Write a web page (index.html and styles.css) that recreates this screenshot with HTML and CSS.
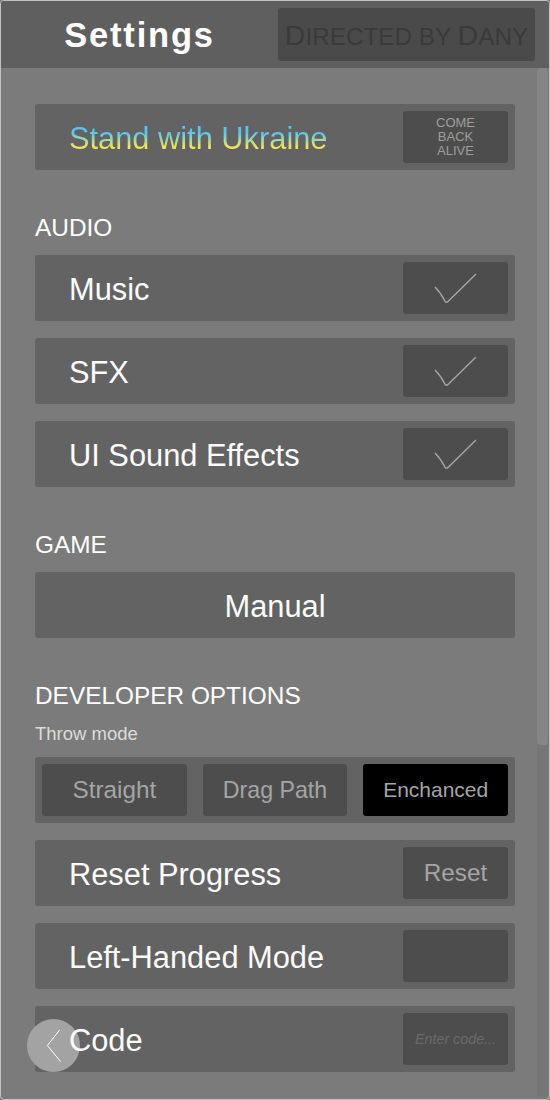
FILE: index.html
```html
<!DOCTYPE html>
<html lang="en">
<head>
    <meta charset="UTF-8">
    <meta name="viewport" content="width=device-width, initial-scale=1.0">
    <title>Settings</title>
    <link rel="stylesheet" href="styles.css">
</head>
<body>
    <div class="screen">
        <div class="header">
            <h1 class="title">Settings</h1>
            <div class="credit">
                <span class="big">D</span>IRECTED BY <span class="big">D</span>ANY
            </div>
        </div>

        <div class="content">
            <div class="card">
                <span class="label ukraine">Stand with Ukraine</span>
                <div class="box small-text">COME<br>BACK<br>ALIVE</div>
            </div>

            <h3 class="section">AUDIO</h3>
            <div class="stack">
                <div class="card">
                    <span class="label">Music</span>
                    <div class="box">
                        <svg class="check" width="105" height="52" viewBox="0 0 105 52">
                            <path d="M32 25 Q38 31 42.5 40 L44.5 40 L73 12" fill="none" stroke="#a4a4a4" stroke-width="1.4"/>
                        </svg>
                    </div>
                </div>
                <div class="card">
                    <span class="label">SFX</span>
                    <div class="box">
                        <svg class="check" width="105" height="52" viewBox="0 0 105 52">
                            <path d="M32 25 Q38 31 42.5 40 L44.5 40 L73 12" fill="none" stroke="#a4a4a4" stroke-width="1.4"/>
                        </svg>
                    </div>
                </div>
                <div class="card">
                    <span class="label">UI Sound Effects</span>
                    <div class="box">
                        <svg class="check" width="105" height="52" viewBox="0 0 105 52">
                            <path d="M32 25 Q38 31 42.5 40 L44.5 40 L73 12" fill="none" stroke="#a4a4a4" stroke-width="1.4"/>
                        </svg>
                    </div>
                </div>
            </div>

            <h3 class="section">GAME</h3>
            <div class="card center">
                <span class="label">Manual</span>
            </div>

            <h3 class="section">DEVELOPER OPTIONS</h3>
            <p class="sub">Throw mode</p>
            <div class="stack">
                <div class="card options">
                    <div class="opt opt-a">Straight</div>
                    <div class="opt opt-b">Drag Path</div>
                    <div class="opt opt-c active">Enchanced</div>
                </div>
                <div class="card">
                    <span class="label">Reset Progress</span>
                    <div class="box btn-text">Reset</div>
                </div>
                <div class="card">
                    <span class="label">Left-Handed Mode</span>
                    <div class="box"></div>
                </div>
                <div class="card">
                    <span class="label">Code</span>
                    <div class="box placeholder">Enter code...</div>
                </div>
            </div>
        </div>

        <div class="scrollbar"><div class="thumb"></div></div>

        <button class="back" aria-label="Back">
            <svg width="53" height="53" viewBox="0 0 53 53">
                <path d="M32.6 11 L20.4 26.5 L33.7 42.7" fill="none" stroke="#ffffff" stroke-width="1"/>
            </svg>
        </button>
    </div>
</body>
</html>
```

FILE: styles.css
```css
body {
    margin: 0;
    background: #7b7b7b;
    font-family: "Liberation Sans", Arial, sans-serif;
}

.screen {
    position: relative;
    width: 550px;
    height: 1100px;
    box-sizing: border-box;
    border: 1px solid #c2c2c2;
    border-radius: 4px;
    background: #7b7b7b;
    overflow: hidden;
}

.header {
    display: flex;
    height: 67px;
    background: #5f5f5f;
}

.title {
    flex: 0 0 277px;
    margin: 0;
    text-align: center;
    color: #ffffff;
    font-size: 34.5px;
    letter-spacing: 1.8px;
    line-height: 68px;
    font-weight: bold;
}

.credit {
    margin-top: 7px;
    width: 257px;
    height: 53px;
    box-sizing: border-box;
    border-radius: 3px;
    background: #4a4a4a;
    color: #3a3a3a;
    font-size: 24.3px;
    line-height: 55px;
    text-align: center;
    white-space: nowrap;
}

.credit .big {
    font-size: 28.5px;
}

.content {
    padding: 36px 34px 0 34px;
}

.stack {
    display: flex;
    flex-direction: column;
    gap: 17px;
}

.card {
    display: flex;
    align-items: center;
    justify-content: space-between;
    height: 66px;
    box-sizing: border-box;
    padding: 7px 7px 7px 34px;
    border-radius: 3px;
    background: #636363;
}

.card.center {
    justify-content: center;
    padding-left: 7px;
}

.label {
    position: relative;
    z-index: 2;
    padding-top: 3px;
    color: #fbfbfb;
    font-size: 30.8px;
    line-height: 36px;
}

.ukraine {
    background: linear-gradient(180deg, #58c6f0 38%, #f0e658 74%);
    -webkit-background-clip: text;
    background-clip: text;
    color: transparent;
}

.box {
    flex: 0 0 105px;
    height: 52px;
    border-radius: 3px;
    background: #4d4d4d;
    display: flex;
    align-items: center;
    justify-content: center;
    text-align: center;
    color: #a5a5a5;
}

.check {
    display: block;
}

.small-text {
    font-size: 13px;
    line-height: 14px;
    color: #9e9e9e;
}

.btn-text {
    font-size: 24.3px;
}

.placeholder {
    font-size: 14.3px;
    font-style: italic;
    color: #6a6a6a;
}

.section {
    margin: 44px 0 13px;
    color: #ffffff;
    font-size: 24.4px;
    line-height: 28px;
    font-weight: normal;
}

.sub {
    margin: 0 0 12px;
    color: #dcdcdc;
    font-size: 18.5px;
    line-height: 22px;
}

.options {
    gap: 16px;
    padding-left: 7px;
}

.opt {
    flex: 1;
    height: 52px;
    border-radius: 3px;
    background: #4d4d4d;
    color: #a5a5a5;
    display: flex;
    align-items: center;
    justify-content: center;
}

.opt-a {
    font-size: 24.3px;
}

.opt-b {
    font-size: 23.2px;
}

.opt-c {
    font-size: 21px;
}

.opt.active {
    background: #000000;
}

.scrollbar {
    position: absolute;
    top: 67px;
    right: 1px;
    bottom: 2px;
    width: 11px;
    background: #767676;
}

.thumb {
    height: 677px;
    border-radius: 4px;
    background: #858585;
}

.back {
    position: absolute;
    z-index: 1;
    left: 26px;
    top: 1018px;
    width: 53px;
    height: 53px;
    padding: 0;
    border: none;
    border-radius: 50%;
    background: #a3a3a3;
}

.back svg {
    display: block;
}
```
